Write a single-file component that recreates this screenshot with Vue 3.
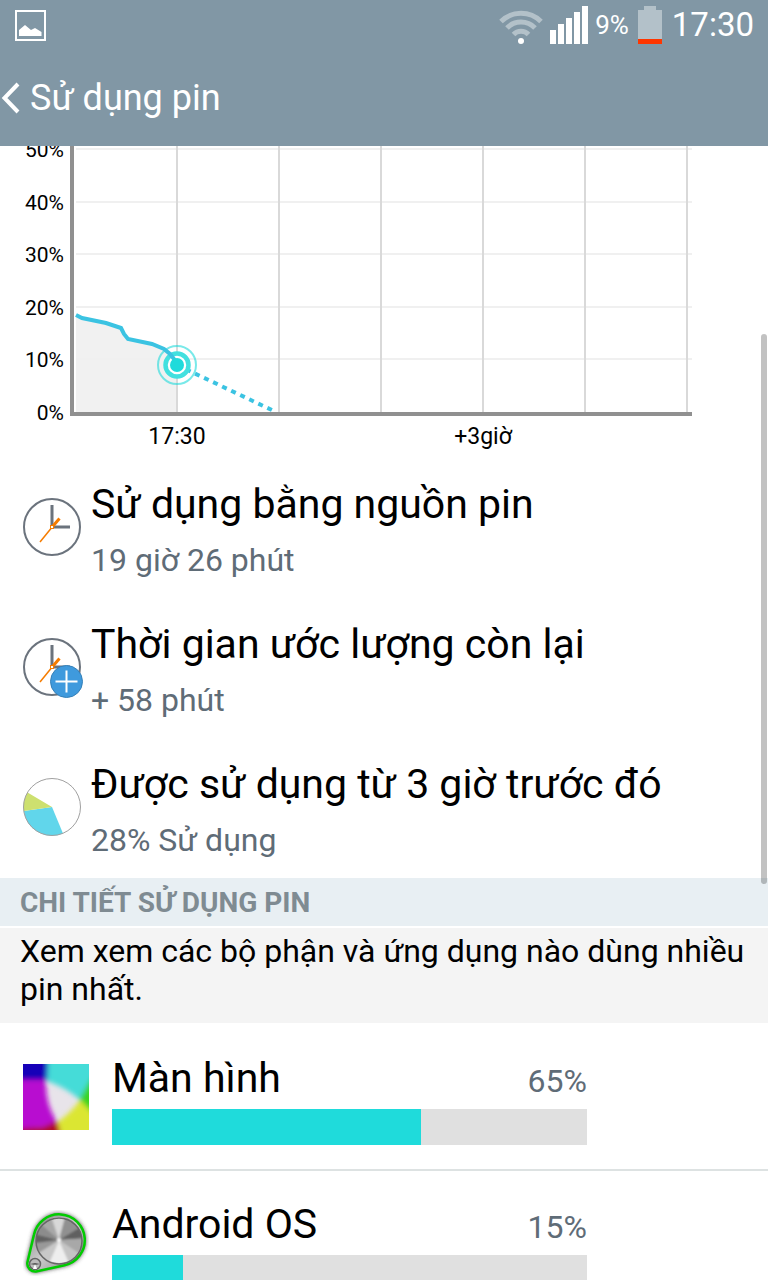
<script setup>
    import { ref } from 'vue'

    const levels = ['50%', '40%', '30%', '20%', '10%', '0%']
    const times = ['17:30', '', '', '+3giờ', '', '']

    const stats = ref([
        { icon: 'clock', title: 'Sử dụng bằng nguồn pin', value: '19 giờ 26 phút' },
        { icon: 'clock-plus', title: 'Thời gian ước lượng còn lại', value: '+ 58 phút' },
        { icon: 'pie', title: 'Được sử dụng từ 3 giờ trước đó', value: '28% Sử dụng' }
    ])

    const apps = ref([
        { icon: 'screen', name: 'Màn hình', percent: 65 },
        { icon: 'system', name: 'Android OS', percent: 15 }
    ])
</script>

<template>
    <div class="page">
        <header class="header">
            <div class="status">
                <svg class="picture" width="32" height="32" viewBox="0 0 32 32">
                    <rect x="1" y="2" width="29" height="29" fill="none" stroke="#fff" stroke-width="2" />
                    <path d="M4 27V21L10 16L16 21L20 19L26.500 23V27Z" fill="#fff" />
                </svg>
                <svg class="wifi" width="44" height="38" viewBox="0 0 44 38">
                    <g fill="none" stroke="#b3c1c9" stroke-width="5">
                        <path d="M2 15.500A28.500 28.500 0 0 1 42 15.500" />
                        <path d="M8 22A19.500 19.500 0 0 1 36 22" />
                        <path d="M14.500 28.500A10.500 10.500 0 0 1 29.500 28.500" />
                    </g>
                    <circle cx="22" cy="35" r="3" fill="#fff" />
                </svg>
                <svg class="signal" width="38" height="38" viewBox="0 0 38 38" fill="#fff">
                    <rect x="0" y="24" width="6" height="14" />
                    <rect x="8" y="18" width="6" height="20" />
                    <rect x="16" y="12" width="6" height="26" />
                    <rect x="24" y="6" width="6" height="32" />
                    <rect x="32" y="0" width="6" height="38" />
                </svg>
                <span class="level">9%</span>
                <svg class="battery" width="24" height="38" viewBox="0 0 24 38">
                    <path d="M6 0H18V4H24V33H0V4H6Z" fill="#b3c1c9" />
                    <rect y="33" width="24" height="5" fill="#ff3600" />
                </svg>
                <span class="time">17:30</span>
            </div>
            <div class="bar">
                <button class="back" type="button" aria-label="Sử dụng pin">
                    <svg width="20" height="32" viewBox="0 0 20 32">
                        <path d="M18 2L4.500 16L18 30" fill="none" stroke="#fff" stroke-width="4" />
                    </svg>
                </button>
                <h1>Sử dụng pin</h1>
            </div>
        </header>

        <main class="content">
            <section class="chart">
                <div class="plot-row">
                    <div class="levels">
                        <span v-for="level in levels" :key="level">{{ level }}</span>
                    </div>
                    <svg class="plot" viewBox="0 0 622 278">
                        <path d="M6 177L12 180L36 185L51 190L54 196L58 201L82 206L94 211L103 218L107 227V274H6Z" fill="#f1f1f1" />
                        <g stroke="#f0f0f0" stroke-width="2">
                            <path d="M6 11H622M6 64H622M6 116H622M6 169H622M6 221H622" />
                        </g>
                        <g stroke="#d9d9d9" stroke-width="2">
                            <path d="M107 0V274M209 0V274M311 0V274M413 0V274M515 0V274M617 0V274" />
                        </g>
                        <path d="M107 227L206 274" fill="none" stroke="#3bc3e2" stroke-width="4" stroke-dasharray="5 5" />
                        <circle cx="107" cy="227" r="13" fill="#fff" />
                        <circle cx="107" cy="227" r="19" fill="none" stroke="#1fdbdb" stroke-opacity=".6" stroke-width="2" />
                        <circle cx="107" cy="227" r="11.500" fill="none" stroke="#42e0df" stroke-width="4.500" />
                        <path d="M6 177L12 180L36 185L51 190L54 196L58 201L82 206L94 211L100 216L104 221L107 227" fill="none" stroke="#3bc3e2" stroke-width="4" />
                        <circle cx="107" cy="227" r="7" fill="#1fdbdb" />
                        <path d="M2 0V276H622" fill="none" stroke="#909090" stroke-width="4" />
                    </svg>
                </div>
                <div class="times">
                    <span v-for="(time, i) in times" :key="i">{{ time }}</span>
                </div>
            </section>

            <ul class="stats">
                <li v-for="stat in stats" :key="stat.icon">
                    <svg class="stat-icon" width="60" height="60" viewBox="0 0 60 60">
                        <template v-if="stat.icon === 'pie'">
                            <path d="M29 29L40 55.500A28.500 28.500 0 0 1 .7 33Z" fill="#61d6eb" />
                            <path d="M29 29L.7 33A28.500 28.500 0 0 1 4.500 14.500Z" fill="#cde06f" />
                            <circle cx="29" cy="29" r="28.500" fill="none" stroke="#a0a0a0" />
                        </template>
                        <template v-else>
                            <circle cx="29" cy="29" r="28" fill="none" stroke="#6b737d" stroke-width="2" />
                            <path d="M29 7V29H47" fill="none" stroke="#6b737d" stroke-width="3" />
                            <path d="M17 44L30 28" stroke="#f57c00" stroke-width="1.500" />
                            <path d="M30 28L36.500 20.500" stroke="#f57c00" stroke-width="3" />
                            <rect x="27.500" y="27.500" width="3" height="3" fill="#fff" stroke="#f57c00" />
                        </template>
                        <template v-if="stat.icon === 'clock-plus'">
                            <circle cx="43.500" cy="43.500" r="16" fill="#3f9add" stroke="#3580b8" />
                            <path d="M43.500 32.500V54.500M32.500 43.500H54.500" stroke="#fff" stroke-width="2" />
                        </template>
                    </svg>
                    <div class="stat-text">
                        <div class="title">{{ stat.title }}</div>
                        <div class="value">{{ stat.value }}</div>
                    </div>
                </li>
            </ul>

            <h2>CHI TIẾT SỬ DỤNG PIN</h2>
            <p class="note">Xem xem các bộ phận và ứng dụng nào dùng nhiều pin nhất.</p>

            <ul class="apps">
                <li v-for="app in apps" :key="app.name">
                    <svg v-if="app.icon === 'screen'" class="app-icon" width="66" height="66" viewBox="0 0 66 66">
                        <defs>
                            <clipPath id="square"><rect width="66" height="66" /></clipPath>
                            <filter id="soft" x="-20%" y="-20%" width="140%" height="140%"><feGaussianBlur stdDeviation="2.500" /></filter>
                        </defs>
                        <g clip-path="url(#square)">
                            <rect width="66" height="66" fill="#e8e4ea" />
                            <g filter="url(#soft)">
                                <path d="M-12 -12H25V17H-12Z" fill="#1200b8" />
                                <path d="M-12 16H23Q22 40 34 58L20 63L-12 66Z" fill="#b80cd0" />
                                <path d="M25 -12H78V12L57 36Q44 24 24 17Z" fill="#45dcd8" />
                                <path d="M78 0L66 18L56 36L66 46L78 58Z" fill="#3bd420" />
                                <path d="M57 36L78 58V78H38L33 59Q47 50 57 36Z" fill="#dbe632" />
                                <path d="M-12 65L20 63L34 57L40 78H-12Z" fill="#b00c28" />
                            </g>
                        </g>
                    </svg>
                    <svg v-else class="app-icon" width="66" height="66" viewBox="0 0 66 66">
                        <defs>
                            <linearGradient id="plate" x1="0" y1="0" x2="1" y2="1">
                                <stop offset="0" stop-color="#777" />
                                <stop offset=".5" stop-color="#ccc" />
                                <stop offset="1" stop-color="#777" />
                            </linearGradient>
                            <clipPath id="disc"><circle cx="36" cy="30" r="23" /></clipPath>
                            <filter id="shade" x="-20%" y="-20%" width="140%" height="140%"><feGaussianBlur stdDeviation="2" /></filter>
                            <filter id="sheen" x="-20%" y="-20%" width="140%" height="140%"><feGaussianBlur stdDeviation="1.200" /></filter>
                        </defs>
                        <path d="M10.900 25A25.700 25.700 0 1 1 41.500 55.200L13 61.500A8 8 0 0 1 4.300 53Z" fill="#444" stroke="#444" stroke-width="2" filter="url(#shade)" />
                        <path d="M10.900 25A25.700 25.700 0 1 1 41.500 55.200L13 61.500A8 8 0 0 1 4.300 53Z" fill="url(#plate)" stroke="#0c0" stroke-width="2.500" />
                        <g clip-path="url(#disc)">
                            <rect x="10" y="4" width="52" height="54" fill="#aaa" />
                            <g filter="url(#sheen)">
                                <path d="M36 30L4 2H26Z" fill="#a8a8a8" />
                                <path d="M36 30L26 0H44Z" fill="#d8d8d8" />
                                <path d="M36 30L44 0H58L66 12Z" fill="#909090" />
                                <path d="M36 30L66 12V28Z" fill="#606060" />
                                <path d="M36 30L66 28V50Z" fill="#a8a8a8" />
                                <path d="M36 30L66 50L50 62Z" fill="#c4c4c4" />
                                <path d="M36 30L50 62H22Z" fill="#eee" />
                                <path d="M36 30L22 62L4 50Z" fill="#c8c8c8" />
                                <path d="M36 30L4 50V34Z" fill="#999" />
                                <path d="M36 30L4 34V22Z" fill="#606060" />
                                <path d="M36 30L4 22V2Z" fill="#8c8c8c" />
                                <circle cx="36" cy="30" r="2" fill="#fff" />
                            </g>
                        </g>
                        <circle cx="36" cy="31" r="23" fill="none" stroke="#666" stroke-width="1.500" />
                        <circle cx="12" cy="54" r="5.500" fill="#bbb" stroke="#666" stroke-width="1.500" />
                        <path d="M7 54L12 53L17 54L12 55Z" fill="#555" />
                        <path d="M12 54L10 59H14Z" fill="#fff" />
                    </svg>
                    <div class="usage">
                        <div class="usage-head">
                            <span class="title">{{ app.name }}</span>
                            <span class="value">{{ app.percent }}%</span>
                        </div>
                        <div class="track">
                            <div class="fill" :style="{ width: app.percent + '%' }"></div>
                        </div>
                    </div>
                </li>
            </ul>

            <div class="scroll-thumb"></div>
        </main>
    </div>
</template>

<style>
    body {
        margin: 0;
    }
</style>

<style scoped>
    .page {
        display: flex;
        flex-direction: column;
        height: 100vh;
        overflow: hidden;
        background: #fff;
        color: #000;
        font-family: Roboto, "Noto Sans", sans-serif;
    }

    .header {
        flex: none;
        background: #8197a5;
        color: #fff;
    }

    .status {
        display: flex;
        align-items: center;
        height: 50px;
        padding: 0 14px;
    }

    .picture {
        margin: 0 auto 0 1px;
    }

    .signal {
        margin-left: 7px;
    }

    .level {
        margin-left: 7px;
        font-size: 26px;
        line-height: 32px;
    }

    .battery {
        margin: 0 10px 0 9px;
    }

    .time {
        font-size: 33px;
        line-height: 40px;
    }

    .bar {
        display: flex;
        align-items: center;
        gap: 10px;
        height: 96px;
    }

    .back {
        display: flex;
        padding: 0;
        border: 0;
        background: none;
    }

    h1 {
        margin: 0;
        font-size: 36px;
        font-weight: 400;
        line-height: 44px;
    }

    .content {
        position: relative;
        flex: 1;
        min-height: 0;
        overflow: hidden;
    }

    .chart {
        margin-top: -8px;
    }

    .plot-row {
        display: flex;
        align-items: flex-start;
        padding-right: 76px;
    }

    .levels {
        display: flex;
        flex: none;
        flex-direction: column;
        justify-content: space-between;
        width: 64px;
        height: 287px;
        margin-right: 6px;
        font-size: 21px;
        line-height: 24px;
        text-align: right;
    }

    .plot {
        flex: 1;
        min-width: 0;
    }

    .times {
        display: grid;
        grid-template-columns: repeat(6, 1fr);
        height: 33px;
        padding: 0 30px 0 126px;
        font-size: 23px;
        line-height: 24px;
        text-align: center;
    }

    ul {
        margin: 0;
        padding: 0;
        list-style: none;
    }

    .stats li {
        display: flex;
        gap: 8px;
        padding: 18px 20px 10px 23px;
    }

    .stat-icon {
        flex: none;
        margin-top: 22px;
    }

    .title {
        font-size: 41px;
        line-height: 56px;
    }

    .value {
        color: #5f6c77;
        font-size: 32px;
        line-height: 56px;
    }

    h2 {
        margin: 0 0 2px;
        padding: 2px 20px 0;
        background: #e8eff3;
        color: #7f8b92;
        font-size: 28px;
        font-weight: 700;
        line-height: 46px;
    }

    .note {
        margin: 0;
        padding: 4px 16px 15px 20px;
        background: #f4f4f4;
        font-size: 32px;
        line-height: 38px;
    }

    .apps li {
        display: flex;
        gap: 23px;
        padding: 25px 181px 24px 23px;
        border-top: 2px solid #dde2e2;
    }

    .apps li:first-child {
        border-color: #fff;
    }

    .app-icon {
        flex: none;
        margin-top: 14px;
    }

    .usage {
        flex: 1;
    }

    .usage-head {
        display: flex;
        align-items: baseline;
        justify-content: space-between;
        height: 56px;
        margin-bottom: 3px;
    }

    .track {
        height: 36px;
        background: #e0e0e0;
    }

    .fill {
        height: 100%;
        background: #1fdbdb;
    }

    .scroll-thumb {
        position: absolute;
        top: 188px;
        right: 1px;
        width: 6px;
        height: 550px;
        border-radius: 3px;
        background: rgba(0, 0, 0, 0.24);
    }
</style>
